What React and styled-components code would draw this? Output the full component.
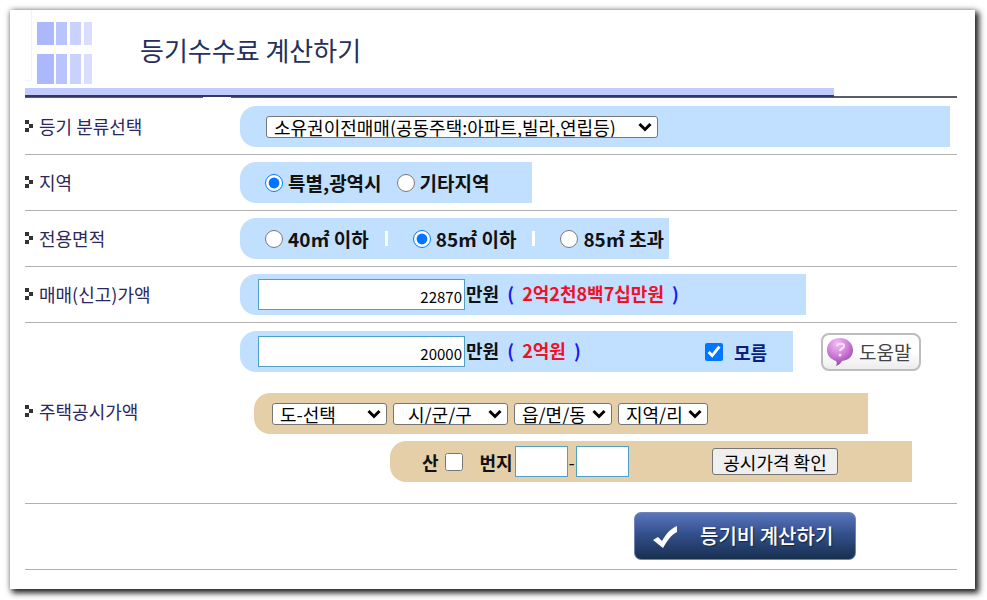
import React from "react";
import styled, { createGlobalStyle } from "styled-components";

const App = () => {
  return (
    <>
      <GlobalStyle />
      <Panel onSubmit={(e) => e.preventDefault()}>
        <Header>
          <Logo />
          <h1>등기수수료 계산하기</h1>
        </Header>
        <Rule>
          <Band />
        </Rule>

        <Row>
          <Title htmlFor="kind">
            <Bullet />
            등기 분류선택
          </Title>
          <Fields>
            <Strip $fill>
              <Choice id="kind" $width={392} $ml={8}>
                소유권이전매매(공동주택:아파트,빌라,연립등)
              </Choice>
            </Strip>
          </Fields>
        </Row>

        <Row role="radiogroup" aria-labelledby="region">
          <Title as="span" id="region">
            <Bullet />
            지역
          </Title>
          <Fields>
            <Strip $width={292}>
              <RadioLine $gap={15}>
                <Option name="region" label="특별,광역시" defaultChecked />
                <Option name="region" label="기타지역" />
              </RadioLine>
            </Strip>
          </Fields>
        </Row>

        <Row role="radiogroup" aria-labelledby="area">
          <Title as="span" id="area">
            <Bullet />
            전용면적
          </Title>
          <Fields>
            <Strip $width={429}>
              <RadioLine>
                <Option name="area" label="40㎡ 이하" />
                <Divider />
                <Option name="area" label="85㎡ 이하" defaultChecked />
                <Divider />
                <Option name="area" label="85㎡ 초과" />
              </RadioLine>
            </Strip>
          </Fields>
        </Row>

        <Row>
          <Title htmlFor="price">
            <Bullet />
            매매(신고)가액
          </Title>
          <Fields>
            <Strip $width={566}>
              <Amount id="price" defaultValue="22870" />
              <Unit>
                만원 <i>(</i> <em>2억2천8백7십만원</em> <i>)</i>
              </Unit>
            </Strip>
          </Fields>
        </Row>

        <Row $last>
          <Title htmlFor="official">
            <Bullet />
            주택공시가액
          </Title>
          <Fields>
            <Line $mb={21}>
              <Strip $width={553}>
                <Amount id="official" defaultValue="20000" />
                <Unit>
                  만원 <i>(</i> <em>2억원</em> <i>)</i>
                </Unit>
                <Unknown>
                  <Check type="checkbox" defaultChecked />
                  모름
                </Unknown>
              </Strip>
              <HelpButton type="button">
                <HelpIcon />
                도움말
              </HelpButton>
            </Line>
            <Line $mb={7} $ml={14}>
              <Strip $sand $width={614}>
                <Places>
                  <Choice aria-label="도" $width={115}>
                    도-선택
                  </Choice>
                  <Choice aria-label="시/군/구" $width={115} $indent={14}>
                    시/군/구
                  </Choice>
                  <Choice aria-label="읍/면/동" $width={98}>
                    읍/면/동
                  </Choice>
                  <Choice aria-label="지역/리" $width={90}>
                    지역/리
                  </Choice>
                </Places>
              </Strip>
            </Line>
            <Line $ml={150}>
              <Strip $sand $width={522}>
                <Mountain>
                  산
                  <Check type="checkbox" />
                </Mountain>
                <Lot htmlFor="lot">번지</Lot>
                <LotInput id="lot" />
                <Dash>-</Dash>
                <LotInput aria-label="번지 부번" />
                <PriceButton type="button">공시가격 확인</PriceButton>
              </Strip>
            </Line>
          </Fields>
        </Row>

        <Footer>
          <Submit type="submit">
            <Tick />
            등기비 계산하기
          </Submit>
        </Footer>
      </Panel>
    </>
  );
};

const Logo = () => (
  <svg width="68" height="78" viewBox="0 0 68 78" aria-hidden="true">
    <path d="M6.5 0V70.5H0" fill="none" stroke="#f3effb" />
    <g fill="#abb8fc">
      <path d="M12 12h17v23H12zM12 44h17v30H12z" />
      <path d="M31 12h11v23H31zM31 44h11v30H31z" fill="#bac4fc" />
      <path d="M45 12h11v23H45zM45 44h11v30H45z" fill="#cad1fd" />
      <path d="M59 12h8v23h-8zM59 44h8v30h-8z" fill="#d9deff" />
    </g>
  </svg>
);

const Bullet = () => (
  <svg width="8" height="12" viewBox="0 0 8 12" fill="#333" aria-hidden="true">
    <path d="M0 0h4v4H0zM4 4h4v4H4zM0 8h4v4H0z" />
  </svg>
);

const Tick = () => (
  <svg width="26" height="28" viewBox="0 0 26 28" aria-hidden="true">
    <path d="M1 18l5-3 4 4c4-7 8-12 15-15v6c-6 3-10 9-14 16z" fill="#fff" />
  </svg>
);

const HelpIcon = () => (
  <svg width="28" height="30" viewBox="0 0 28 30" aria-hidden="true">
    <defs>
      <radialGradient id="bubble" cx="40%" cy="20%" r="85%">
        <stop offset="0" stopColor="#f3bdf5" />
        <stop offset="0.5" stopColor="#cf7fd8" />
        <stop offset="1" stopColor="#8a3f9c" />
      </radialGradient>
    </defs>
    <path
      d="M14 1C6 1 1 6 1 13c0 6 4 9 9 11 1 1 1 3 0 5 3-1 5-3 6-5 7-1 11-5 11-11S22 1 14 1z"
      fill="url(#bubble)"
    />
    <path
      d="M11 9c1-3 7-3 7 0 0 3-4 2-4 5"
      fill="none"
      stroke="#f9e6fb"
      strokeWidth="2"
    />
    <circle cx="14" cy="18" r="1.5" fill="#f9e6fb" />
  </svg>
);

const Choice = ({ children, $width, $ml, $indent, ...rest }) => (
  <SelectBox $width={$width} $ml={$ml}>
    <Select $indent={$indent} {...rest}>
      <option>{children}</option>
    </Select>
    <svg width="14" height="10" viewBox="0 0 14 10" aria-hidden="true">
      <path d="M1.5 2L7 7.5 12.5 2" fill="none" stroke="#000" strokeWidth="3" />
    </svg>
  </SelectBox>
);

const Option = ({ label, ...rest }) => (
  <OptionLabel>
    <Check type="radio" {...rest} />
    {label}
  </OptionLabel>
);

const GlobalStyle = createGlobalStyle`
  * {
    box-sizing: border-box;
  }
  body {
    margin: 0;
    background: #fff;
    overflow-x: hidden;
  }
  body, input, select, button {
    font-family: "Noto Sans CJK KR", sans-serif;
    font-size: 18px;
    line-height: 22px;
  }
`;

const Panel = styled.form`
  margin: 10px 12px 11px 10px;
  padding: 0 18px 19px 15px;
  background: #fff;
  box-shadow: 3px 3px 6px 1px rgba(0, 0, 0, 0.85), 0 0 6px rgba(0, 0, 0, 0.25);
`;

const Header = styled.header`
  display: flex;
  align-items: flex-start;
  height: 78px;
  h1 {
    margin: 22px 0 0 47px;
    color: #26305c;
    font-size: 26px;
    font-weight: 400;
    line-height: 36px;
  }
`;

/* grey hairline with a short break in it, under the coloured band */
const Rule = styled.div`
  height: 11px;
  background: linear-gradient(
      90deg,
      #5c5c66 178px,
      #fff 178px,
      #fff 206px,
      #5c5c66 206px
    )
    0 8px / 100% 2px no-repeat;
`;

const Band = styled.div`
  width: 87%;
  height: 9px;
  max-width: 809px;
  background: #c2cbfb;
  border-bottom: 2px solid #303868;
`;

const Row = styled.div`
  display: grid;
  grid-template-columns: 215px 1fr;
  align-items: center;
  padding: ${(p) => (p.$last ? "8px 0 21px" : "7px 0")};
  border-bottom: 1px solid #b0b0b0;
  > label {
    padding-top: ${(p) => (p.$last ? 10 : 0)}px;
  }
`;

const Title = styled.label`
  display: flex;
  align-items: center;
  gap: 6px;
  padding-bottom: 2px;
  color: #2b2860;
`;

const Fields = styled.div`
  min-width: 0;
`;

const Line = styled.div`
  display: flex;
  align-items: center;
  margin: 0 0 ${(p) => p.$mb || 0}px ${(p) => p.$ml || 0}px;
`;

const Strip = styled.div`
  display: flex;
  align-items: center;
  height: 41px;
  padding-left: 18px;
  background: ${(p) => (p.$sand ? "#e5cfa8" : "#c1e0ff")};
  border-radius: 16px 0 0 16px;
  color: #111;
  font-weight: 700;
  white-space: nowrap;
  ${(p) => (p.$fill ? "margin-right: 7px;" : `width: ${p.$width}px;`)}
`;

const SelectBox = styled.div`
  display: grid;
  align-items: center;
  width: ${(p) => p.$width}px;
  margin-left: ${(p) => p.$ml || 0}px;
  > * {
    grid-area: 1 / 1;
  }
  svg {
    justify-self: end;
    margin-right: 6px;
    pointer-events: none;
  }
`;

const Select = styled.select`
  appearance: none;
  width: 100%;
  height: 22px;
  padding: 0 20px 0 ${(p) => p.$indent || 7}px;
  background: #fff;
  border: 1px solid #767676;
  border-radius: 3px;
  color: #000;
  line-height: 20px;
`;

const RadioLine = styled.div`
  display: flex;
  align-items: center;
  gap: ${(p) => p.$gap || 0}px;
  padding-left: 7px;
`;

const OptionLabel = styled.label`
  display: flex;
  align-items: center;
  gap: 5px;
  font-size: 19px;
`;

const Check = styled.input`
  width: 18px;
  height: 18px;
  margin: 0;
  accent-color: #0075ff;
`;

const Divider = styled.span`
  width: 3px;
  height: 15px;
  margin: 0 25px 0 16px;
  background: #fff;
`;

const Amount = styled.input`
  width: 207px;
  height: 31px;
  padding: 4px 2px 0;
  background: #fff;
  border: 1px solid #4f9fc9;
  font-size: 15px;
  text-align: right;
`;

const Unit = styled.span`
  padding: 0 0 4px 1px;
  i {
    margin: 0 4px;
    color: #1a1af0;
    font-style: normal;
  }
  em {
    color: #ee1127;
    font-style: normal;
  }
`;

const Unknown = styled.label`
  display: flex;
  align-items: center;
  gap: 11px;
  margin: 0 26px 0 auto;
  color: #0a1f80;
`;

const HelpButton = styled.button`
  display: flex;
  align-items: center;
  gap: 5px;
  width: 100px;
  height: 38px;
  margin-left: 28px;
  padding: 0 0 0 3px;
  background: linear-gradient(#fff 50%, #ececec);
  border: 2px solid #bdbdbd;
  border-radius: 8px;
  color: #444;
  font-size: 19px;
  white-space: nowrap;
`;

const Places = styled.div`
  display: flex;
  gap: 6px;
`;

const Mountain = styled.label`
  display: flex;
  align-items: center;
  gap: 6px;
  margin-left: 14px;
`;

const Lot = styled.label`
  margin: 0 2px 0 17px;
`;

const LotInput = styled.input`
  width: 53px;
  height: 31px;
  padding: 0 2px;
  background: #fff;
  border: 1px solid #4f9fc9;
`;

const Dash = styled.span`
  width: 8px;
  text-align: center;
  font-weight: 400;
`;

const PriceButton = styled.button`
  width: 126px;
  height: 27px;
  margin: 0 74px 0 auto;
  padding: 0;
  background: #efefef;
  border: 1px solid #767676;
  border-radius: 3px;
  color: #000;
`;

const Footer = styled.footer`
  display: flex;
  justify-content: flex-end;
  padding: 8px 101px 9px 0;
  border-bottom: 1px solid #b0b0b0;
`;

const Submit = styled.button`
  display: flex;
  align-items: center;
  gap: 22px;
  width: 222px;
  height: 48px;
  padding: 0 0 0 17px;
  background: linear-gradient(#5a76bd, #34508c 45%, #17304f);
  border: 1px solid #7084b5;
  border-radius: 7px;
  color: #fff;
  font-size: 20px;
  font-weight: 500;
  text-shadow: 1px 1px 1px #14264a;
  white-space: nowrap;
`;

export default App;
